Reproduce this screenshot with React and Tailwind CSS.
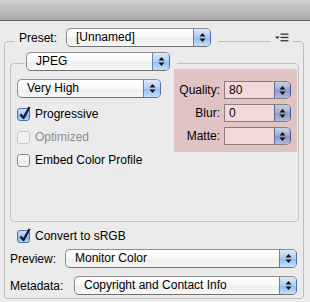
import React from 'react';

const Arrows = () => (
  <svg width="7" height="11" viewBox="0 0 7 11">
    <path d="M3.5 1L6.5 4.5H0.5Z" fill="#111" />
    <path d="M3.5 10L6.5 6.5H0.5Z" fill="#111" />
  </svg>
);

const Popup = ({ value, className = '' }) => (
  <div
    className={`flex h-[19px] overflow-hidden rounded-[5px] border border-[#8e8e8e] border-b-[#707070] border-r-[#4f6f9f] bg-[linear-gradient(#ffffff,#f8f8f8_50%,#ededed_51%,#f7f7f7)] ${className}`}
  >
    <span className="flex-1 truncate pl-[9px] text-[12px] leading-[17px] text-black">{value}</span>
    <span className="flex w-[17px] items-center justify-center border-l border-[#5f82b5] bg-[linear-gradient(#dceafb,#a9cdf3_50%,#8dbdf0_51%,#c4e0fb)]">
      <Arrows />
    </span>
  </div>
);

const Field = ({ label, value }) => (
  <div className="flex h-[18px] items-center">
    <span className="w-[46px] text-right text-[12px] text-black">{label}</span>
    <div className="ml-[4px] flex h-[18px] w-[67px] overflow-hidden rounded-r-[5px] border border-[#8a7d7e] border-r-[#4d5686] bg-[#f2d8d8]">
      <span className="flex-1 pl-[4px] text-[12px] leading-[16px] text-black">{value}</span>
      <span className="flex w-[16px] items-center justify-center border-l border-[#5f6894] bg-[linear-gradient(#c9cde6,#9fa8d2_50%,#8c97c8_51%,#b1b8dd)]">
        <Arrows />
      </span>
    </div>
  </div>
);

const Check = ({ checked, disabled, label }) => (
  <div className="flex h-[16px] items-center">
    <span
      className={`relative h-[13px] w-[13px] rounded-[3px] border ${
        checked
          ? 'border-[#4f72a8] bg-[linear-gradient(#cfe2f8,#9cc4ef_50%,#7fb2ec_51%,#b4d6f8)]'
          : disabled
          ? 'border-[#c6c6c6] bg-[#f3f3f3]'
          : 'border-[#8a8a8a] bg-[linear-gradient(#ffffff,#f2f2f2_50%,#e6e6e6_51%,#f6f6f6)]'
      }`}
    >
      {checked && (
        <svg className="absolute left-[1px] top-[-3px] overflow-visible" width="12" height="14" viewBox="0 0 12 14">
          <path d="M1.5 8.5L4.5 12L10.5 1" fill="none" stroke="#0f1d3a" strokeWidth="2.4" strokeLinejoin="round" />
        </svg>
      )}
    </span>
    <span className={`ml-[5px] text-[12px] ${disabled ? 'text-[#8e8e8e]' : 'text-black'}`}>{label}</span>
  </div>
);

const MenuIcon = () => (
  <svg width="14" height="9" viewBox="0 0 14 9">
    <path d="M0 3.5H4.5L2.25 6Z" fill="#222" />
    <rect x="5.5" y="0.5" width="8" height="1.3" fill="#333" />
    <rect x="5.5" y="3.8" width="8" height="1.3" fill="#333" />
    <rect x="5.5" y="7.1" width="8" height="1.3" fill="#333" />
  </svg>
);

export default function App() {
  return (
    <div className="h-[302px] w-[310px] overflow-hidden bg-[#ebebeb] font-['Liberation_Sans',Arial,sans-serif] text-black">
      {/* Title bar */}
      <div className="h-[21px] border-b border-[#5f5f5f] bg-[linear-gradient(#d0d0d0,#a8a8a8)]" />

      {/* Outer group */}
      <div className="ml-[4px] mt-[20px] w-[300px] rounded-[4px] border border-[#bcbcbc] pb-[3px]">
        <div className="-mt-[14px] ml-[10px] mr-[10px] flex h-[19px] items-center">
          <div className="flex items-center bg-[#ebebeb] pl-[4px] pr-[7px]">
            <span className="text-[12px]">Preset:</span>
            <Popup value="[Unnamed]" className="ml-[9px] w-[145px]" />
          </div>
          <div className="flex-1" />
          <div className="flex items-center bg-[#ebebeb] px-[4px]">
            <MenuIcon />
          </div>
        </div>

        {/* Inner group */}
        <div className="ml-[5px] mr-[4px] mt-[16px] h-[159px] rounded-[4px] border border-[#c2c2c2]">
          <div className="-mt-[12px] ml-[14px] flex h-[19px] items-center">
            <div className="bg-[#ebebeb] pl-[1px] pr-[7px]">
              <Popup value="JPEG" className="w-[144px]" />
            </div>
          </div>
          <div className="-mt-[2px] flex items-start">
            <div className="w-[163px] pl-[6px] pt-[10px]">
              <Popup value="Very High" className="w-[144px]" />
              <div className="mt-[8px] flex flex-col gap-[7px]">
                <Check checked label="Progressive" />
                <Check disabled label="Optimized" />
                <Check label="Embed Color Profile" />
              </div>
            </div>
            <div className="flex w-[123px] flex-col gap-[5px] bg-[#e0c4c4] pb-[7px] pt-[12px]">
              <Field label="Quality:" value="80" />
              <Field label="Blur:" value="0" />
              <Field label="Matte:" value="" />
            </div>
          </div>
        </div>

        <div className="mt-[6px] pl-[12px]">
          <Check checked label="Convert to sRGB" />
        </div>
        <div className="mt-[5px] flex items-center pl-[5px] pr-[6px]">
          <span className="w-[50px] text-[12px]">Preview:</span>
          <Popup value="Monitor Color" className="ml-[5px] flex-1" />
        </div>
        <div className="mt-[8px] flex items-center pl-[5px] pr-[6px]">
          <span className="w-[59px] text-[12px]">Metadata:</span>
          <Popup value="Copyright and Contact Info" className="ml-[5px] flex-1" />
        </div>
      </div>
    </div>
  );
}
